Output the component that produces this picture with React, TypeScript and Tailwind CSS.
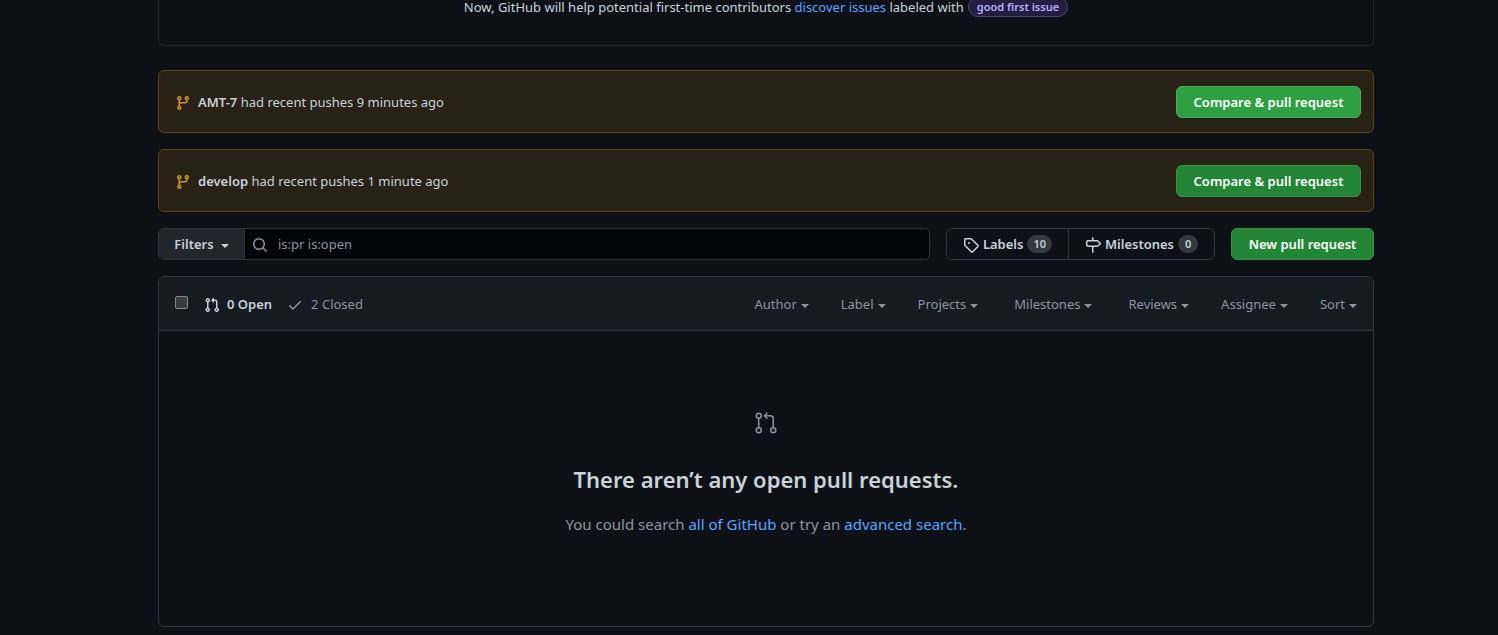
import type { ReactNode } from "react";
import { GoGitPullRequest } from "react-icons/go";

const paths = {
  branch:
    "M11.75 2.5a.75.75 0 100 1.5.75.75 0 000-1.5zm-2.25.75a2.25 2.25 0 113 2.122V6A2.5 2.5 0 0110 8.5H6a1 1 0 00-1 1v1.128a2.251 2.251 0 11-1.5 0V5.372a2.25 2.25 0 111.5 0v1.836A2.492 2.492 0 016 7h4a1 1 0 001-1v-.628A2.25 2.25 0 019.5 3.25zM4.25 12a.75.75 0 100 1.5.75.75 0 000-1.5zM3.5 3.25a.75.75 0 111.5 0 .75.75 0 01-1.5 0z",
  pull:
    "M7.177 3.073L9.573.677A.25.25 0 0110 .854v4.792a.25.25 0 01-.427.177L7.177 3.427a.25.25 0 010-.354zM3.75 2.5a.75.75 0 100 1.5.75.75 0 000-1.5zm-2.25.75a2.25 2.25 0 113 2.122v5.256a2.251 2.251 0 11-1.5 0V5.372A2.25 2.25 0 011.5 3.25zM11 2.5h-1V4h1a1 1 0 011 1v5.628a2.251 2.251 0 101.5 0V5A2.5 2.5 0 0011 2.5zm1 10.25a.75.75 0 111.5 0 .75.75 0 01-1.5 0zM3.75 12a.75.75 0 100 1.5.75.75 0 000-1.5z",
  check:
    "M13.78 4.22a.75.75 0 010 1.06l-7.25 7.25a.75.75 0 01-1.06 0L2.22 9.28a.75.75 0 011.06-1.06L6 10.94l6.72-6.72a.75.75 0 011.06 0z",
  search:
    "M11.5 7a4.499 4.499 0 11-8.998 0A4.499 4.499 0 0111.5 7zm-.82 4.74a6 6 0 111.06-1.06l3.04 3.04a.75.75 0 11-1.06 1.06l-3.04-3.04z",
  tag:
    "M2.5 7.775V2.75a.25.25 0 01.25-.25h5.025a.25.25 0 01.177.073l6.25 6.25a.25.25 0 010 .354l-5.025 5.025a.25.25 0 01-.354 0l-6.25-6.25a.25.25 0 01-.073-.177zm-1.5 0V2.75C1 1.784 1.784 1 2.75 1h5.025c.464 0 .91.184 1.238.513l6.25 6.25a1.75 1.75 0 010 2.474l-5.026 5.026a1.75 1.75 0 01-2.474 0l-6.25-6.25A1.75 1.75 0 011 7.775zM6 5a1 1 0 100 2 1 1 0 000-2z",
  milestone:
    "M7.75 0a.75.75 0 01.75.75V3h3.634c.414 0 .814.147 1.13.414l2.07 1.75a1.75 1.75 0 010 2.672l-2.07 1.75a1.75 1.75 0 01-1.13.414H8.5v5.25a.75.75 0 11-1.5 0V10H2.75A1.75 1.75 0 011 8.25v-3.5C1 3.784 1.784 3 2.75 3H7V.75A.75.75 0 017.75 0zm0 8.5h4.384a.25.25 0 00.161-.06l2.07-1.75a.25.25 0 000-.38l-2.07-1.75a.25.25 0 00-.161-.06H2.75a.25.25 0 00-.25.25v3.5c0 .138.112.25.25.25h5z",
};

function Icon({ name, className = "" }: { name: keyof typeof paths; className?: string }) {
  return (
    <svg aria-hidden="true" viewBox="0 0 16 16" className={`size-4 shrink-0 fill-current ${className}`}>
      <path fillRule="evenodd" d={paths[name]} />
    </svg>
  );
}

function Caret() {
  return (
    <svg aria-hidden="true" viewBox="0 0 8 4" className="mt-1 h-1 w-2 shrink-0 fill-current">
      <path d="M0 0h8L4 4z" />
    </svg>
  );
}

function Counter({ children }: { children: ReactNode }) {
  return (
    <span className="min-w-5 rounded-full bg-[#343941] px-1.5 text-center text-[11px] leading-[18px]">
      {children}
    </span>
  );
}

function PushNotice({ branch, when, active = false }: { branch: string; when: string; active?: boolean }) {
  return (
    <section className="mb-4 flex items-center justify-between rounded-md border border-[#5f4310] bg-[#272116] pt-[15px] pr-3 pb-[14px] pl-4">
      <div className="flex items-center gap-[7px]">
        <Icon name="branch" className="mt-0.5 text-[#d29922]" />
        <p>
          <strong className="font-semibold">{branch}</strong> had recent pushes {when}
        </p>
      </div>
      <button
        type="button"
        className={`h-8 min-w-[185px] rounded-md border px-3 font-semibold text-white ${
          active ? "border-[#46ac58] bg-[#2ea043]" : "border-[#399149] bg-[#238636]"
        }`}
      >
        Compare &amp; pull request
      </button>
    </section>
  );
}

const menuGroups = [["Author", "Label", "Projects"], ["Milestones"], ["Reviews", "Assignee", "Sort"]];

export default function App() {
  return (
    <div className="min-h-screen overflow-hidden bg-[#0d1117] pl-[34px] font-['Noto_Sans','Open_Sans',sans-serif] text-[13px] leading-5 text-[#c9d1d9]">
      <main className="mx-auto max-w-[1280px] px-8">
        <section className="mb-6 rounded-b-md border-x border-b border-[#21262d] pb-[31px] text-center">
          <p className="flex items-center justify-center gap-1 leading-[14px]">
            <span>
              Now, GitHub will help potential first-time contributors{" "}
              <a href="#discover" className="text-[#58a6ff]">
                discover issues
              </a>{" "}
              labeled with
            </span>
            <span className="-my-[3px] rounded-full border border-[#4d4580] bg-[#211e40] px-2 text-[11px] leading-[18px] font-semibold text-[#bbb0ff]">
              good first issue
            </span>
          </p>
        </section>

        <PushNotice branch="AMT-7" when="9 minutes ago" active />
        <PushNotice branch="develop" when="1 minute ago" />

        <div className="mb-4 flex gap-4">
          <form className="flex h-8 min-w-0 flex-1 rounded-md border border-[#30363d] bg-[#010409]">
            <button
              type="button"
              className="flex min-w-[86px] items-center justify-center gap-[7px] rounded-l-[5px] border-r border-[#30363d] bg-[#21262d] font-semibold"
            >
              Filters <Caret />
            </button>
            <label className="flex flex-1 items-center gap-2.5 pl-[7px] text-[#8b949e]">
              <Icon name="search" className="mt-0.5" />
              <input
                type="text"
                aria-label="Search all issues"
                defaultValue="is:pr is:open"
                className="w-full flex-1 bg-transparent outline-none"
              />
            </label>
          </form>
          <nav className="flex h-8 rounded-md border border-[#30363d] font-semibold">
            <a href="#labels" className="flex min-w-[122px] items-center justify-center gap-1 border-r border-[#30363d]">
              <Icon name="tag" className="mt-0.5" />
              Labels
              <Counter>10</Counter>
            </a>
            <a href="#milestones" className="flex min-w-[145px] items-center justify-center gap-1">
              <Icon name="milestone" className="mt-0.5" />
              Milestones
              <Counter>0</Counter>
            </a>
          </nav>
          <button
            type="button"
            className="h-8 min-w-[143px] rounded-md border border-[#399149] bg-[#238636] px-3 font-semibold text-white"
          >
            New pull request
          </button>
        </div>

        <section className="mb-2 rounded-md border border-[#30363d]">
          <div className="flex items-center rounded-t-[5px] border-b border-[#30363d] bg-[#161b22] px-4 pt-[17px] pb-4">
            <input
              type="checkbox"
              aria-label="Select all"
              className="mr-4 mb-1 size-[13px] appearance-none rounded-[2px] border border-[#858585] bg-[#3b3b3b]"
            />
            <a href="#open" className="mr-[15px] flex items-center gap-[7px] font-semibold">
              <Icon name="pull" className="mt-0.5" />0 Open
            </a>
            <a href="#closed" className="flex items-center gap-2 text-[#8b949e]">
              <Icon name="check" className="mt-0.5" />2 Closed
            </a>
            <div className="ml-auto flex gap-9 text-[#8b949e]">
              {menuGroups.map((group) => (
                <div key={group[0]} className="flex gap-8">
                  {group.map((item) => (
                    <button key={item} type="button" className="flex items-center gap-1">
                      {item} <Caret />
                    </button>
                  ))}
                </div>
              ))}
            </div>
          </div>
          <div className="flex flex-col items-center px-10 py-20 text-center">
            <GoGitPullRequest aria-hidden="true" className="mb-7 size-6 text-[#8b949e]" />
            <h3 className="mb-[17px] text-[22px] leading-8 font-semibold">There aren’t any open pull requests.</h3>
            <p className="mb-2.5 text-[15px] leading-6 text-[#8b949e]">
              You could search{" "}
              <a href="#all" className="text-[#58a6ff]">
                all of GitHub
              </a>{" "}
              or try an{" "}
              <a href="#advanced" className="text-[#58a6ff]">
                advanced search
              </a>
              .
            </p>
          </div>
        </section>
      </main>
    </div>
  );
}
